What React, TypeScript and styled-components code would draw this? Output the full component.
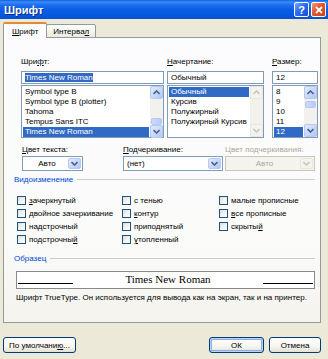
import styled, { createGlobalStyle } from "styled-components";

const GlobalStyle = createGlobalStyle`
	html, body {
		margin: 0;
		padding: 0;
		background: #ece9d8;
	}
`;

const Window = styled.div`
	width: 328px;
	height: 359px;
	background: #ece9d8;
	display: flex;
	flex-direction: column;
	font-family: "Liberation Sans", Arial, sans-serif;
	font-size: 8px;
	color: #000;
	overflow: hidden;
`;

const TitleBar = styled.div`
	height: 19px;
	flex-shrink: 0;
	display: flex;
	align-items: center;
	padding: 0 2px 0 4px;
	background: linear-gradient(
		to bottom,
		#0a5fe8 0%,
		#3d8cf5 10%,
		#1f6ff0 25%,
		#0b5fe6 50%,
		#0658e0 80%,
		#0451d3 100%
	);
`;

const TitleText = styled.div`
	flex: 1;
	color: #fff;
	font-weight: bold;
	font-size: 11px;
	text-shadow: 1px 1px 0 #0a2d8a;
`;

const TitleButton = styled.div<{ $close?: boolean }>`
	width: 15px;
	height: 15px;
	margin-left: 2px;
	border: 1px solid #fff;
	border-radius: 2px;
	box-sizing: border-box;
	display: flex;
	align-items: center;
	justify-content: center;
	color: #fff;
	font-weight: bold;
	font-size: 11px;
	background: ${(p) =>
		p.$close
			? "linear-gradient(135deg, #f49a7c 0%, #e45b32 40%, #cc3e12 100%)"
			: "linear-gradient(135deg, #7aa7ff 0%, #2d6cf0 45%, #1a50d0 100%)"};
`;

const Body = styled.div`
	flex: 1;
	display: flex;
	flex-direction: column;
	padding: 3px 7px 0 3px;
`;

const TabRow = styled.div`
	display: flex;
	align-items: flex-end;
	height: 16px;
	margin-bottom: -1px;
	position: relative;
	z-index: 1;
`;

const Tab = styled.div<{ $active?: boolean }>`
	height: ${(p) => (p.$active ? "16px" : "14px")};
	box-sizing: border-box;
	padding: 0 ${(p) => (p.$active ? "8px" : "6px")};
	display: flex;
	align-items: center;
	border: 1px solid #919b9c;
	border-bottom: ${(p) => (p.$active ? "none" : "1px solid #919b9c")};
	border-top: ${(p) => (p.$active ? "2px solid #e68b2c" : "1px solid #919b9c")};
	border-radius: 2px 2px 0 0;
	background: ${(p) =>
		p.$active ? "#fcfcfe" : "linear-gradient(to bottom, #fff, #eceae0)"};
	margin-left: ${(p) => (p.$active ? "0" : "-1px")};
`;

const U = styled.span`
	text-decoration: underline;
`;

const Panel = styled.div`
	height: 286px;
	box-sizing: border-box;
	border: 1px solid #919b9c;
	background: linear-gradient(to bottom, #fcfcfe 0%, #fbfbfa 70%, #f4f3ee 100%);
	padding: 18px 0 0 17px;
	display: flex;
	flex-direction: column;
`;

const FieldRow = styled.div`
	display: flex;
`;

const Field = styled.div<{ $w: number; $ml?: number }>`
	width: ${(p) => p.$w}px;
	margin-left: ${(p) => p.$ml ?? 0}px;
	display: flex;
	flex-direction: column;
`;

const Label = styled.div<{ $disabled?: boolean; $mb?: number }>`
	height: 12px;
	line-height: 12px;
	margin-bottom: ${(p) => p.$mb ?? 3}px;
	white-space: nowrap;
	color: ${(p) => (p.$disabled ? "#aca899" : "#000")};
`;

const TextBox = styled.div`
	height: 13px;
	box-sizing: border-box;
	border: 1px solid #7f9db9;
	background: #fff;
	padding: 0 3px;
	line-height: 11px;
	white-space: nowrap;
`;

const Highlight = styled.span`
	background: #316ac5;
	color: #fff;
`;

const ListBox = styled.div`
	margin-top: 1px;
	height: 53px;
	box-sizing: border-box;
	border: 1px solid #7f9db9;
	background: #fff;
	display: flex;
`;

const ListItems = styled.div`
	flex: 1;
	padding: 1px 1px 0 1px;
	overflow: hidden;
`;

const ListItem = styled.div<{ $selected?: boolean }>`
	height: 10px;
	line-height: 10px;
	padding-left: 2px;
	white-space: nowrap;
	background: ${(p) => (p.$selected ? "#316ac5" : "transparent")};
	color: ${(p) => (p.$selected ? "#fff" : "#000")};
`;

const ScrollBar = styled.div`
	width: 13px;
	display: flex;
	flex-direction: column;
	background: #f3f1ec;
`;

const ScrollTrack = styled.div`
	flex: 1;
	display: flex;
	flex-direction: column;
	padding: 0 1px;
`;

const ScrollThumb = styled.div`
	height: 5px;
	border: 1px solid #b5c9f5;
	border-radius: 2px;
	background: linear-gradient(to right, #cbdaff, #b8ccf9);
`;

const ArrowButton = styled.div<{ $disabled?: boolean }>`
	width: 13px;
	height: 13px;
	box-sizing: border-box;
	border: 1px solid ${(p) => (p.$disabled ? "#e8e6de" : "#b7c9f0")};
	border-radius: 2px;
	background: ${(p) =>
		p.$disabled
			? "#f4f3ee"
			: "linear-gradient(135deg, #e2ebfe 0%, #c5d6fb 60%, #b0c6f7 100%)"};
	display: flex;
	align-items: center;
	justify-content: center;
	flex-shrink: 0;
`;

const Arrow = ({ up, disabled }: { up?: boolean; disabled?: boolean }) => (
	<svg width="7" height="5" viewBox="0 0 7 5">
		<path
			d={up ? "M0.5 4 L3.5 1 L6.5 4" : "M0.5 1 L3.5 4 L6.5 1"}
			fill="none"
			stroke={disabled ? "#c9c7ba" : "#4d6185"}
			strokeWidth="1.6"
		/>
	</svg>
);

const Scroll = ({ thumb, disabled }: { thumb?: number; disabled?: boolean }) => (
	<ScrollBar>
		<ArrowButton $disabled={disabled}>
			<Arrow up disabled={disabled} />
		</ArrowButton>
		<ScrollTrack>
			{thumb !== undefined && <ScrollThumb style={{ marginTop: thumb }} />}
		</ScrollTrack>
		<ArrowButton $disabled={disabled}>
			<Arrow disabled={disabled} />
		</ArrowButton>
	</ScrollBar>
);

const SecondRow = styled.div`
	display: flex;
	margin-top: 6px;
`;

const Combo = styled.div<{ $disabled?: boolean }>`
	height: 15px;
	box-sizing: border-box;
	border: 1px solid ${(p) => (p.$disabled ? "#c9c7ba" : "#7f9db9")};
	background: ${(p) => (p.$disabled ? "#f4f3ee" : "#fff")};
	display: flex;
	align-items: stretch;
	padding: 1px;
`;

const ComboText = styled.div<{ $center?: boolean; $disabled?: boolean }>`
	flex: 1;
	display: flex;
	align-items: center;
	justify-content: ${(p) => (p.$center ? "center" : "flex-start")};
	padding-left: 2px;
	color: ${(p) => (p.$disabled ? "#aca899" : "#000")};
`;

const ComboButton = styled(ArrowButton)`
	height: auto;
	width: 13px;
`;

const GroupHeader = styled.div<{ $mt: number }>`
	display: flex;
	align-items: center;
	margin: ${(p) => p.$mt}px 5px 0 -7px;
	height: 11px;
	color: #0046d5;
	&::after {
		content: "";
		flex: 1;
		height: 1px;
		margin-left: 4px;
		background: #d0d0bf;
	}
`;

const CheckGrid = styled.div`
	display: grid;
	grid-template-columns: 105px 97px 1fr;
	grid-auto-rows: 13px;
	margin: 9px 0 0 -4px;
`;

const CheckItem = styled.div`
	display: flex;
	align-items: center;
	height: 13px;
	white-space: nowrap;
`;

const CheckBox = styled.div`
	width: 9px;
	height: 9px;
	box-sizing: border-box;
	border: 1px solid #1c5180;
	background: linear-gradient(135deg, #dcdcd7 0%, #f2f2ef 50%, #fff 100%);
	margin: 0 3px 0 0;
	flex-shrink: 0;
`;

const Preview = styled.div`
	margin: 7px 5px 0 -5px;
	height: 18px;
	box-sizing: border-box;
	border: 1px solid #8a8a8a;
	background: #fff;
	display: flex;
	align-items: center;
	padding: 0 1px 0 1px;
`;

const PreviewLine = styled.div<{ $w: number }>`
	width: ${(p) => p.$w}px;
	height: 1px;
	align-self: flex-end;
	margin-bottom: 4px;
	background: #000;
`;

const PreviewText = styled.div`
	flex: 1;
	text-align: center;
	font-family: "Liberation Serif", "Times New Roman", serif;
	font-size: 11px;
	padding-bottom: 2px;
	white-space: nowrap;
`;

const Description = styled.div`
	margin: 4px 0 0 -5px;
	height: 10px;
	line-height: 10px;
	white-space: nowrap;
`;

const Footer = styled.div`
	display: flex;
	margin-top: 14px;
`;

const Button = styled.div<{ $w: number; $ml?: number; $default?: boolean }>`
	width: ${(p) => p.$w}px;
	margin-left: ${(p) => p.$ml ?? 0}px;
	height: 16px;
	box-sizing: border-box;
	border: 1px solid #003c74;
	border-radius: 3px;
	background: linear-gradient(to bottom, #fff 0%, #f6f5f0 60%, #e3e1d6 100%);
	box-shadow: ${(p) =>
		p.$default ? "inset 0 0 0 1px #bcd4f6, inset 0 0 0 2px #89ade4" : "none"};
	display: flex;
	align-items: center;
	justify-content: center;
	white-space: nowrap;
`;

const fonts = ["Symbol type B", "Symbol type B (plotter)", "Tahoma", "Tempus Sans ITC", "Times New Roman"];
const styles = ["Обычный", "Курсив", "Полужирный", "Полужирный Курсив"];
const sizes = ["8", "9", "10", "11", "12"];

export default function App() {
	return (
		<>
			<GlobalStyle />
			<Window>
				<TitleBar>
					<TitleText>Шрифт</TitleText>
					<TitleButton>?</TitleButton>
					<TitleButton $close>
						<svg width="8" height="8" viewBox="0 0 8 8">
							<path d="M1 1 L7 7 M7 1 L1 7" stroke="#fff" strokeWidth="1.8" />
						</svg>
					</TitleButton>
				</TitleBar>
				<Body>
					<TabRow>
						<Tab $active>
							<U>Ш</U>рифт
						</Tab>
						<Tab>
							Интерва<U>л</U>
						</Tab>
					</TabRow>
					<Panel>
						<FieldRow>
							<Field $w={143}>
								<Label>
									Шри<U>ф</U>т:
								</Label>
								<TextBox>
									<Highlight>Times New Roman</Highlight>
								</TextBox>
								<ListBox>
									<ListItems>
										{fonts.map((f, i) => (
											<ListItem key={f} $selected={i === 4}>
												{f}
											</ListItem>
										))}
									</ListItems>
									<Scroll thumb={19} />
								</ListBox>
							</Field>
							<Field $w={97} $ml={3}>
								<Label>
									<U>Н</U>ачертание:
								</Label>
								<TextBox>Обычный</TextBox>
								<ListBox>
									<ListItems>
										{styles.map((s, i) => (
											<ListItem key={s} $selected={i === 0}>
												{s}
											</ListItem>
										))}
									</ListItems>
									<Scroll disabled />
								</ListBox>
							</Field>
							<Field $w={46} $ml={8}>
								<Label>
									<U>Р</U>азмер:
								</Label>
								<TextBox>12</TextBox>
								<ListBox>
									<ListItems>
										{sizes.map((s, i) => (
											<ListItem key={s} $selected={i === 4}>
												{s}
											</ListItem>
										))}
									</ListItems>
									<Scroll thumb={2} />
								</ListBox>
							</Field>
						</FieldRow>
						<SecondRow>
							<Field $w={61} $ml={1}>
								<Label $mb={0}>
									<U>Ц</U>вет текста:
								</Label>
								<Combo>
									<ComboText $center>Авто</ComboText>
									<ComboButton>
										<Arrow />
									</ComboButton>
								</Combo>
							</Field>
							<Field $w={100} $ml={40}>
								<Label $mb={0}>
									<U>П</U>одчеркивание:
								</Label>
								<Combo>
									<ComboText>(нет)</ComboText>
									<ComboButton>
										<Arrow />
									</ComboButton>
								</Combo>
							</Field>
							<Field $w={90} $ml={2}>
								<Label $disabled $mb={0}>
									Цвет подчеркивания:
								</Label>
								<Combo $disabled>
									<ComboText $center $disabled>
										Авто
									</ComboText>
									<ComboButton $disabled>
										<Arrow disabled />
									</ComboButton>
								</Combo>
							</Field>
						</SecondRow>
						<GroupHeader $mt={3}>Видоизменение</GroupHeader>
						<CheckGrid>
							<CheckItem>
								<CheckBox />
								<U>з</U>ачеркнутый
							</CheckItem>
							<CheckItem>
								<CheckBox />с тенью
							</CheckItem>
							<CheckItem>
								<CheckBox />
								малые прописные
							</CheckItem>
							<CheckItem>
								<CheckBox />
								двойное зачеркивание
							</CheckItem>
							<CheckItem>
								<CheckBox />
								<U>к</U>онтур
							</CheckItem>
							<CheckItem>
								<CheckBox />
								<U>в</U>се прописные
							</CheckItem>
							<CheckItem>
								<CheckBox />
								надстрочный
							</CheckItem>
							<CheckItem>
								<CheckBox />
								приподнятый
							</CheckItem>
							<CheckItem>
								<CheckBox />
								скрыты<U>й</U>
							</CheckItem>
							<CheckItem>
								<CheckBox />
								подстрочны<U>й</U>
							</CheckItem>
							<CheckItem>
								<CheckBox />
								<U>у</U>топленный
							</CheckItem>
						</CheckGrid>
						<GroupHeader $mt={7}>Образец</GroupHeader>
						<Preview>
							<PreviewLine $w={55} />
							<PreviewText>Times New Roman</PreviewText>
							<PreviewLine $w={50} />
						</Preview>
						<Description>
							Шрифт TrueType. Он используется для вывода как на экран, так и на принтер.
						</Description>
					</Panel>
					<Footer>
						<Button $w={73}>
							По умолчани<U>ю</U>...
						</Button>
						<Button $w={55} $ml={133} $default>
							ОК
						</Button>
						<Button $w={52} $ml={5}>
							Отмена
						</Button>
					</Footer>
				</Body>
			</Window>
		</>
	);
}
